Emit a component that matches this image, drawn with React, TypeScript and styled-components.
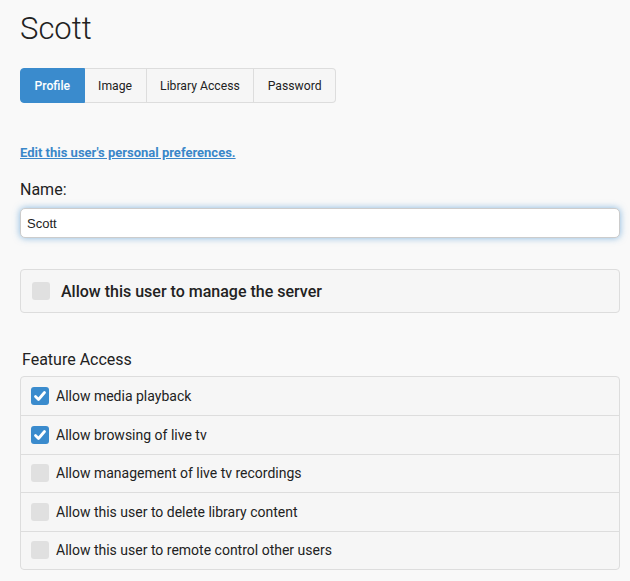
import React from "react";
import styled, { createGlobalStyle } from "styled-components";

const Global = createGlobalStyle`
  html, body { margin: 0; padding: 0; background: #f9f9f9; }
  body { font-family: Roboto, "Noto Sans", sans-serif; color: #222; }
`;

const Page = styled.div`
  padding: 8px 10px 0 20px;
  display: flex;
  flex-direction: column;
`;

const Title = styled.h1`
  margin: 0;
  font-size: 31px;
  font-weight: 300;
  line-height: 42px;
  color: #222;
`;

const Tabs = styled.div`
  display: flex;
  margin-top: 18px;
  align-self: flex-start;
`;

const Tab = styled.div<{ $active?: boolean }>`
  height: 35px;
  box-sizing: border-box;
  padding: 0 13.5px;
  display: flex;
  align-items: center;
  font-size: 12.2px;
  font-weight: ${(p) => (p.$active ? 500 : 400)};
  color: ${(p) => (p.$active ? "#fff" : "#222")};
  background: ${(p) => (p.$active ? "#3a8bcd" : "#f6f6f6")};
  border: 1px solid ${(p) => (p.$active ? "#3a8bcd" : "#ddd")};
  border-left-width: ${(p) => (p.$active ? "1px" : "0")};
  &:first-child { border-radius: 4px 0 0 4px; }
  &:last-child { border-radius: 0 4px 4px 0; }
`;

const Link = styled.a`
  margin-top: 42px;
  font-size: 13px;
  font-weight: 700;
  color: #3a87c9;
  text-decoration: underline;
  line-height: 16px;
  align-self: flex-start;
`;

const Label = styled.div`
  margin-top: 19px;
  font-size: 16px;
  line-height: 20px;
  color: #222;
`;

const Input = styled.div`
  margin-top: 8px;
  width: 600px;
  height: 30px;
  box-sizing: border-box;
  background: #fff;
  border: 1px solid #ccc;
  border-radius: 5px;
  box-shadow: 0 0 7px #3a8bcd99;
  padding: 0 6px;
  display: flex;
  align-items: center;
  font-family: "Liberation Sans", Arial, sans-serif;
  font-size: 13px;
  color: #222;
`;

const ManageBox = styled.label`
  margin-top: 31px;
  width: 600px;
  height: 44px;
  box-sizing: border-box;
  border: 1px solid #ddd;
  border-radius: 4px;
  background: #f6f6f6;
  display: flex;
  align-items: center;
  gap: 11px;
  padding-left: 11px;
  font-size: 16px;
  font-weight: 500;
  color: #222;
`;

const Legend = styled.div`
  margin-top: 37px;
  margin-left: 2px;
  font-size: 16px;
  line-height: 20px;
  color: #222;
`;

const List = styled.div`
  margin-top: 6px;
  width: 600px;
  box-sizing: border-box;
  border: 1px solid #ddd;
  border-radius: 4px;
  background: #f6f6f6;
  display: flex;
  flex-direction: column;
`;

const Row = styled.label`
  height: 38.4px;
  box-sizing: border-box;
  display: flex;
  align-items: center;
  gap: 7px;
  padding-left: 10px;
  font-size: 14px;
  font-weight: 400;
  color: #222;
  & + & { border-top: 1px solid #ddd; }
`;

const Box = styled.span<{ $checked?: boolean }>`
  width: 18px;
  height: 18px;
  border-radius: 3px;
  flex: none;
  background: ${(p) => (p.$checked ? "#3a8bcd" : "#e0e0e0")};
  display: flex;
  align-items: center;
  justify-content: center;
`;

const Check = ({ checked }: { checked?: boolean }) => (
  <Box $checked={checked}>
    {checked && (
      <svg width="14" height="14" viewBox="0 0 14 14">
        <path d="M2.5 7.5 L5.5 10.5 L11.5 3.5" fill="none" stroke="#fff" strokeWidth="2.8" strokeLinecap="round" strokeLinejoin="round" />
      </svg>
    )}
  </Box>
);

const features = [
  { label: "Allow media playback", checked: true },
  { label: "Allow browsing of live tv", checked: true },
  { label: "Allow management of live tv recordings", checked: false },
  { label: "Allow this user to delete library content", checked: false },
  { label: "Allow this user to remote control other users", checked: false },
];

export default function App() {
  return (
    <>
      <Global />
      <Page>
        <Title>Scott</Title>
        <Tabs>
          <Tab $active>Profile</Tab>
          <Tab>Image</Tab>
          <Tab>Library Access</Tab>
          <Tab>Password</Tab>
        </Tabs>
        <Link>Edit this user's personal preferences.</Link>
        <Label>Name:</Label>
        <Input>Scott</Input>
        <ManageBox>
          <Check />
          Allow this user to manage the server
        </ManageBox>
        <Legend>Feature Access</Legend>
        <List>
          {features.map((f) => (
            <Row key={f.label}>
              <Check checked={f.checked} />
              {f.label}
            </Row>
          ))}
        </List>
      </Page>
    </>
  );
}
